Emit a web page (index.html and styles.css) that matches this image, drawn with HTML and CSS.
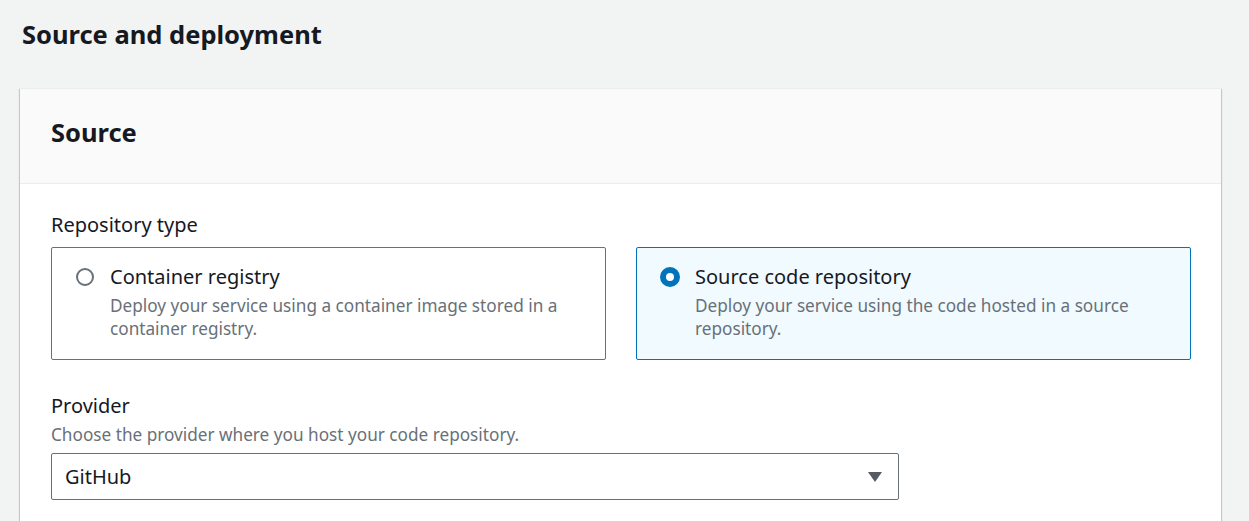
FILE: index.html
```html
<!DOCTYPE html>
<html lang="en">
<head>
<meta charset="utf-8">
<title>Source and deployment</title>
<link rel="stylesheet" href="styles.css">
</head>
<body>
<div class="page">
  <h2 class="page-title">Source and deployment</h2>
  <section class="card">
    <header class="card-header">
      <h3 class="card-title">Source</h3>
    </header>
    <div class="card-body">
      <div class="field">
        <div class="label">Repository type</div>
        <div class="tiles">
          <label class="tile">
            <span class="radio"></span>
            <span class="tile-text">
              <span class="tile-title">Container registry</span>
              <span class="tile-desc">Deploy your service using a container image stored in a container registry.</span>
            </span>
          </label>
          <label class="tile tile-selected">
            <span class="radio radio-checked"></span>
            <span class="tile-text">
              <span class="tile-title">Source code repository</span>
              <span class="tile-desc">Deploy your service using the code hosted in a source repository.</span>
            </span>
          </label>
        </div>
      </div>
      <div class="field field-provider">
        <div class="label">Provider</div>
        <div class="hint">Choose the provider where you host your code repository.</div>
        <div class="select">
          <span class="select-value">GitHub</span>
          <svg class="caret" width="16" height="16" viewBox="0 0 16 16"><path d="M1 3h14L8 13z" fill="#545b64"/></svg>
        </div>
      </div>
    </div>
  </section>
</div>
</body>
</html>
```
FILE: styles.css
```css
html, body {
  margin: 0;
  padding: 0;
  background: #f2f3f3;
  font-family: "Noto Sans", "Open Sans", sans-serif;
  color: #16191f;
}
.page {
  padding: 16px 28px 0 20px;
}
.page-title {
  margin: 0 0 0 2px;
  font-size: 25.5px;
  font-weight: 700;
  line-height: 36px;
  height: 72px;
}
.card {
  background: #fff;
  border-top: 1px solid #eaeded;
  box-shadow: 0 1px 1px 0 rgba(0,28,36,0.3), 1px 1px 1px 0 rgba(0,28,36,0.15), -1px 1px 1px 0 rgba(0,28,36,0.15);
  height: 440px;
}
.card-header {
  background: #fafafa;
  border-bottom: 1px solid #eaeded;
  height: 95px;
  box-sizing: border-box;
  display: flex;
  align-items: center;
  padding: 0 31px 8px;
}
.card-title {
  margin: 0;
  font-size: 25.5px;
  font-weight: 700;
  line-height: 30px;
}
.card-body {
  padding: 28px 30px 0 31px;
}
.label {
  font-size: 20px;
  line-height: 26px;
}
.tiles {
  display: grid;
  grid-template-columns: 1fr 1fr;
  gap: 30px;
  margin-top: 9px;
}
.tile {
  border: 1px solid #687078;
  border-radius: 2px;
  box-sizing: border-box;
  height: 113px;
  padding: 15px 20px 0 24px;
  display: flex;
  gap: 16px;
}
.tile-selected {
  border-color: #0073bb;
  background: #f1faff;
}
.radio {
  flex: none;
  width: 18px;
  height: 18px;
  box-sizing: border-box;
  border: 2px solid #687078;
  border-radius: 50%;
  margin-top: 5px;
  background: #fff;
}
.radio-checked {
  border: 6px solid #0073bb;
  width: 20px;
  height: 20px;
  margin-top: 4px;
  margin-left: -1px;
  margin-right: -1px;
}
.tile-text {
  display: flex;
  flex-direction: column;
}
.tile-title {
  font-size: 20px;
  line-height: 28px;
}
.tile-desc {
  font-size: 17.2px;
  line-height: 23px;
  color: #687078;
  margin-top: 3px;
}
.field-provider {
  margin-top: 33px;
}
.hint {
  font-size: 17.2px;
  line-height: 23px;
  color: #687078;
  margin-top: 4px;
}
.select {
  margin-top: 7px;
  width: 848px;
  height: 47px;
  box-sizing: border-box;
  border: 1px solid #687078;
  border-radius: 2px;
  display: flex;
  align-items: center;
  justify-content: space-between;
  padding: 0 15px 0 13px;
}
.select-value {
  font-size: 20px;
}
.caret {
  display: block;
}
```
